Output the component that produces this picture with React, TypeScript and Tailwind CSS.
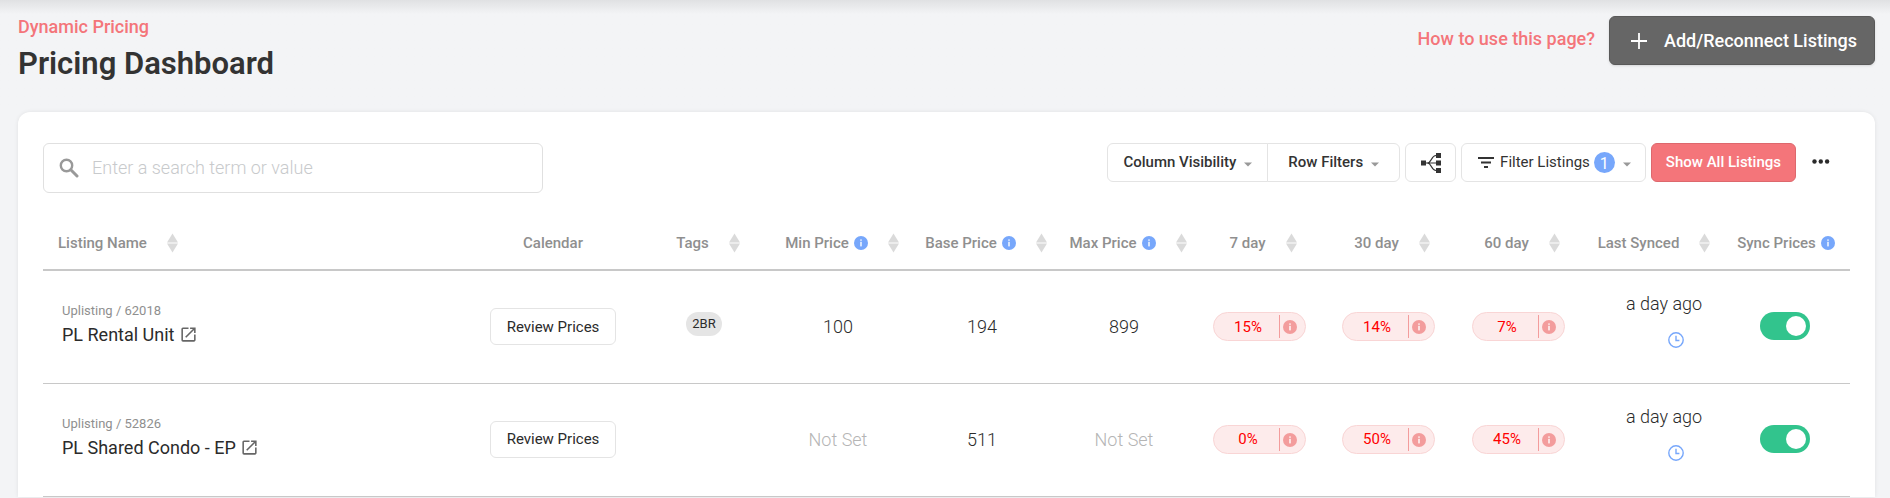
import { useState } from "react";
import type { ReactNode } from "react";
import { MdOpenInNew } from "react-icons/md";

type Price = number | null;

interface Listing {
  id: string;
  source: string;
  name: string;
  tags: string[];
  min: Price;
  base: Price;
  max: Price;
  occupancy: number[];
  synced: string;
}

const listings: Listing[] = [
  { id: "62018", source: "Uplisting", name: "PL Rental Unit", tags: ["2BR"], min: 100, base: 194, max: 899, occupancy: [15, 14, 7], synced: "a day ago" },
  { id: "52826", source: "Uplisting", name: "PL Shared Condo - EP", tags: [], min: null, base: 511, max: null, occupancy: [0, 50, 45], synced: "a day ago" },
];

interface Column {
  label: string;
  width: string;
  sortable?: boolean;
  info?: boolean;
}

const columns: Column[] = [
  { label: "Listing Name", width: "w-[415px]", sortable: true },
  { label: "Calendar", width: "w-[190px]" },
  { label: "Tags", width: "w-[120px]", sortable: true },
  { label: "Min Price", width: "w-[148px]", sortable: true, info: true },
  { label: "Base Price", width: "w-[140px]", sortable: true, info: true },
  { label: "Max Price", width: "w-[144px]", sortable: true, info: true },
  { label: "7 day", width: "w-[126px]", sortable: true },
  { label: "30 day", width: "w-[132px]", sortable: true },
  { label: "60 day", width: "w-[128px]", sortable: true },
  { label: "Last Synced", width: "w-[136px]", sortable: true },
  { label: "Sync Prices", width: "w-[128px]", info: true },
];

function SearchIcon() {
  return (
    <svg width="20" height="20" viewBox="0 0 20 20" className="shrink-0 fill-none stroke-[#999]" aria-hidden="true">
      <circle cx="7.5" cy="7.5" r="5.700" strokeWidth="2.400" />
      <path d="M11.800 11.800 18 18" strokeWidth="3" strokeLinecap="round" />
    </svg>
  );
}

function FilterIcon() {
  return (
    <svg width="16" height="11" viewBox="0 0 16 11" className="shrink-0 fill-[#333]" aria-hidden="true">
      <path d="M0 0h16v2H0zM3 4.500h10v2H3zM6 9h4v2H6z" />
    </svg>
  );
}

function SortIcon() {
  return (
    <svg width="11" height="20" viewBox="0 0 11 20" className="shrink-0 fill-[#dadada]" aria-hidden="true">
      <path d="M5.5 0.5 11 9.400H0z" />
      <path d="M0 10.600h11L5.500 19.500z" />
    </svg>
  );
}

function InfoIcon({ className }: { className: string }) {
  return (
    <svg width="14" height="14" viewBox="0 0 14 14" className={className} aria-hidden="true">
      <circle cx="7" cy="7" r="7" fill="currentColor" />
      <rect x="6.3" y="3.4" width="1.4" height="1.4" fill="#fff" />
      <rect x="6.3" y="5.8" width="1.4" height="4.600" fill="#fff" />
    </svg>
  );
}

function Caret() {
  return (
    <svg width="8" height="5" viewBox="0 0 8 5" className="mt-1 shrink-0 fill-[#999999]" aria-hidden="true">
      <path d="M0 0.5h8L4 4.5z" />
    </svg>
  );
}

function ClockIcon() {
  return (
    <svg width="16" height="16" viewBox="0 0 16 16" className="fill-none stroke-[#77a7fb]" aria-hidden="true">
      <circle cx="8" cy="8" r="7.2" strokeWidth="1.4" />
      <path d="M8 3.8V8.5h3.4" strokeWidth="1.4" />
    </svg>
  );
}

function GroupIcon() {
  return (
    <svg width="20" height="20" viewBox="0 0 20 20" aria-hidden="true">
      <path d="M5 10h10M6 10c5 0 4-7.500 9-7.500M6 10c5 0 4 7.500 9 7.500" fill="none" stroke="#333" strokeWidth="1.200" />
      <path d="M0 7.500h5v5H0zM15 0h5v5h-5zM15 7.500h5v5h-5zM15 15h5v5h-5z" fill="#333" />
    </svg>
  );
}

function ToolButton({ label, className, children }: { label?: string; className: string; children: ReactNode }) {
  return (
    <button type="button" aria-label={label} className={`flex h-[39px] items-center border border-[#e4e4e4] bg-white text-[15px] text-[#333] ${className}`}>
      {children}
    </button>
  );
}

function PriceCell({ value }: { value: Price }) {
  return (
    <td className="pr-2 text-center text-lg font-light">
      {value === null ? <span className="text-[#b5b5b5]">Not Set</span> : value}
    </td>
  );
}

function OccupancyPill({ value }: { value: number }) {
  return (
    <div className="mx-auto flex h-[29px] w-[93px] items-center rounded-full border border-[#f9d5d5] bg-[#fdebeb] pr-2">
      <span className="flex-1 pl-1 text-center text-[15px] text-[#ff0000]">{value}%</span>
      <span className="flex h-[23px] items-center border-l border-[#f39c9c] pl-[3px]">
        <InfoIcon className="text-[#f39c9c]" />
      </span>
    </div>
  );
}

function SyncToggle({ name }: { name: string }) {
  const [on, setOn] = useState(true);
  return (
    <label className="inline-flex cursor-pointer align-middle">
      <input type="checkbox" className="peer sr-only" aria-label={`Sync prices for ${name}`} checked={on} onChange={() => setOn(!on)} />
      <span className="flex h-7 w-[50px] items-center rounded-full bg-[#bbb] px-1 peer-checked:justify-end peer-checked:bg-[#32c48d]">
        <span className="size-5 rounded-full bg-white" />
      </span>
    </label>
  );
}

function ListingRow({ listing }: { listing: Listing }) {
  return (
    <tr className="h-[113px] border-b border-[#c8c8c8]">
      <td className="pb-1.5 pl-[19px]">
        <div className="text-[13px] leading-5 text-[#8f8f8f]">
          {listing.source} / {listing.id}
        </div>
        <a href={`#listing-${listing.id}`} className="flex items-center gap-1 pt-0.5 text-lg leading-6">
          {listing.name}
          <MdOpenInNew className="size-[19px] text-[#666]" />
        </a>
      </td>
      <td className="text-center">
        <button type="button" className="h-[37px] rounded-md border border-[#e4e4e4] bg-white px-4 text-[15px]">
          Review Prices
        </button>
      </td>
      <td className="pr-2 pb-1.5 text-center">
        {listing.tags.map((tag) => (
          <span key={tag} className="inline-block rounded-full bg-[#e5e5e5] px-[6px] text-[13px] leading-6">
            {tag}
          </span>
        ))}
      </td>
      <PriceCell value={listing.min} />
      <PriceCell value={listing.base} />
      <PriceCell value={listing.max} />
      {listing.occupancy.map((value, i) => (
        <td key={i} className="pr-2">
          <OccupancyPill value={value} />
        </td>
      ))}
      <td className="pb-3.5 pl-5 text-center text-lg leading-6 font-light">
        {listing.synced}
        <div className="flex justify-center pt-4 pl-6">
          <ClockIcon />
        </div>
      </td>
      <td className="pr-0.5 pb-0.5 text-center">
        <SyncToggle name={listing.name} />
      </td>
    </tr>
  );
}

export default function App() {
  return (
    <div className="min-h-screen bg-[#f3f4f6] font-['Roboto',sans-serif] text-[#2b2b2b]">
      <div className="bg-linear-to-b from-[#e0e1e3] to-[#f3f4f6] to-[14px] pr-[15px] pl-[18px]">
        <header className="flex items-start justify-between pt-4 pb-[30px]">
          <div>
            <div className="text-lg leading-[22px] font-medium text-[#f4757a]">Dynamic Pricing</div>
            <h1 className="pt-2 text-[31px] leading-9 font-semibold text-[#333]">Pricing Dashboard</h1>
          </div>
          <div className="flex items-center gap-[14px]">
            <a href="#help" className="pb-1 text-lg font-medium text-[#f4757a]">
              How to use this page?
            </a>
            <button type="button" className="flex h-[49px] items-center gap-[17px] rounded-md border border-[#595959] bg-[#666] pr-[17px] pl-[21px] text-lg font-medium text-white shadow-sm">
              <svg width="16" height="16" viewBox="0 0 16 16" className="stroke-white" aria-hidden="true">
                <path d="M8 0v16M0 8h16" strokeWidth="1.800" />
              </svg>
              Add/Reconnect Listings
            </button>
          </div>
        </header>
      </div>

      <main className="mr-[15px] ml-[18px] rounded-t-xl bg-white px-[25px] pt-[31px] shadow-[0_0_4px_rgba(0,0,0,0.08)]">
        <div className="flex items-start justify-between">
          <label className="flex h-[50px] w-[500px] items-center gap-[13px] rounded-md border border-[#e0e0e0] bg-white px-[15px] text-[#999]">
            <SearchIcon />
            <input type="search" aria-label="Search listings" placeholder="Enter a search term or value" className="min-w-0 flex-1 text-lg font-light text-[#333] outline-none placeholder:text-[#c8cacc]" />
          </label>

          <div className="flex items-start gap-[5px] pr-5">
            <div className="flex">
              <ToolButton className="gap-2 rounded-l-md px-[15px] font-medium">
                Column Visibility
                <Caret />
              </ToolButton>
              <ToolButton className="-ml-px gap-2 rounded-r-md px-5 font-medium">
                Row Filters
                <Caret />
              </ToolButton>
            </div>
            <ToolButton label="Group listings" className="w-[51px] justify-center rounded-md">
              <GroupIcon />
            </ToolButton>
            <ToolButton className="gap-1 rounded-md pr-[14px] pl-4">
              <span className="pr-0.5">
                <FilterIcon />
              </span>
              Filter Listings
              <span className="grid size-[21px] place-items-center rounded-full bg-[#77a7fb] text-base text-white">1</span>
              <span className="pl-1">
                <Caret />
              </span>
            </ToolButton>
            <button type="button" className="h-[39px] rounded-md border border-[#dd686d] bg-[#f4757a] px-[14px] text-[15px] font-medium text-white">
              Show All Listings
            </button>
            <button type="button" aria-label="More actions" className="flex h-[37px] items-center pl-[11px]">
              <svg width="18" height="5" viewBox="0 0 18 5" className="fill-[#2b2b2b]" aria-hidden="true">
                <circle cx="2.500" cy="2.500" r="2.200" />
                <circle cx="8.800" cy="2.500" r="2.200" />
                <circle cx="15.100" cy="2.500" r="2.200" />
              </svg>
            </button>
          </div>
        </div>

        <table className="mt-6 w-full table-fixed border-collapse">
          <thead>
            <tr className="h-[53px] border-b-2 border-[#c8c8c8] text-[15px] text-[#8f8f8f]">
              {columns.map((col, i) => (
                <th key={col.label} scope="col" className={`${col.width} p-0 font-medium`}>
                  <div className={`flex items-center ${i === 0 ? "pl-[15px]" : "justify-center"}`}>
                    <span className="whitespace-nowrap">{col.label}</span>
                    {col.info && <InfoIcon className="ml-[5px] shrink-0 text-[#77a7fb]" />}
                    {col.sortable && (
                      <span className="pl-5">
                        <SortIcon />
                      </span>
                    )}
                  </div>
                </th>
              ))}
            </tr>
          </thead>
          <tbody>
            {listings.map((listing) => (
              <ListingRow key={listing.id} listing={listing} />
            ))}
          </tbody>
        </table>
      </main>
    </div>
  );
}
